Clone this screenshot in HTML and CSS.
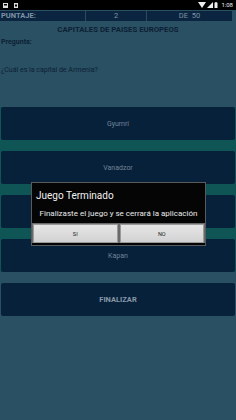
FILE: index.html
```html
<!DOCTYPE html>
<html>
<head>
<meta charset="utf-8">
<link rel="stylesheet" href="styles.css">
</head>
<body>
<div class="screen">
  <div class="statusbar">
    <div class="st-left">
      <svg width="5" height="5" viewBox="0 0 5 5"><rect x="0.5" y="0.5" width="4" height="4" fill="none" stroke="#ddd" stroke-width="1"/><rect x="1" y="2.5" width="3" height="1.5" fill="#ddd"/></svg>
      <svg width="4" height="5" viewBox="0 0 4 5"><rect x="0" y="0" width="4" height="5" fill="#ddd"/><rect x="1" y="1.5" width="2" height="2" fill="#000"/></svg>
    </div>
    <div class="st-right">
      <svg width="8" height="6" viewBox="0 0 8 6"><path d="M0 0 H8 L4 6 Z" fill="#eee"/></svg>
      <svg width="6" height="6" viewBox="0 0 6 6"><path d="M6 0 V6 H0 Z" fill="#eee"/></svg>
      <svg width="4" height="6" viewBox="0 0 4 6"><rect x="0.5" y="0.7" width="3" height="5.3" fill="#eee"/><rect x="1.3" y="0" width="1.4" height="1" fill="#eee"/></svg>
      <span class="clock">1:08</span>
    </div>
  </div>
  <div class="scorebar">
    <div class="cell c1">PUNTAJE:</div>
    <div class="cell c2">2</div>
    <div class="cell c3">DE&nbsp;&nbsp;50</div>
  </div>
  <div class="title">CAPITALES DE PAISES EUROPEOS</div>
  <div class="label">Pregunta:</div>
  <div class="question">¿Cuál es la capital de Armenia?</div>
  <div class="answers">
    <div class="btn">Gyumri</div>
    <div class="btn">Vanadzor</div>
    <div class="btn"></div>
    <div class="btn">Kapan</div>
  </div>
  <div class="btn finish">FINALIZAR</div>

  <div class="dialog">
    <div class="dlg-title">Juego Terminado</div>
    <div class="dlg-msg">Finalizaste el juego y se cerrará la aplicación</div>
    <div class="dlg-buttons">
      <div class="dlg-btn">SI</div>
      <div class="dlg-btn">NO</div>
    </div>
  </div>
</div>
</body>
</html>
```

FILE: styles.css
```css
html, body {
  margin: 0;
  padding: 0;
}
body {
  width: 236px;
  height: 420px;
  background: #2a5063;
  font-family: Roboto, "Liberation Sans", sans-serif;
  overflow: hidden;
}
.screen {
  position: relative;
  width: 236px;
  height: 420px;
}
.statusbar {
  height: 10px;
  background: #000;
  display: flex;
  justify-content: space-between;
  align-items: center;
  padding: 0 3px;
}
.st-left {
  display: flex;
  gap: 6px;
  align-items: center;
}
.st-right {
  display: flex;
  gap: 1px;
  align-items: center;
}
.clock {
  color: #eee;
  font-size: 6px;
  margin-left: 2px;
  line-height: 6px;
}
.scorebar {
  display: flex;
  height: 10px;
  margin-top: 1px;
  margin-right: 4px;
  background: #0b2540;
}
.cell {
  color: #7d93a6;
  font-size: 7.5px;
  line-height: 10px;
  font-weight: bold;
  box-sizing: border-box;
}
.c1 {
  width: 86px;
  padding-left: 1px;
  border-right: 1px solid #2c4a60;
}
.c2 {
  width: 61px;
  text-align: center;
  border-right: 1px solid #2c4a60;
  font-weight: normal;
}
.c3 {
  flex: 1;
  text-align: center;
  font-weight: normal;
}
.title {
  margin-top: 3px;
  text-align: center;
  font-weight: bold;
  font-size: 7.8px;
  line-height: 12px;
  color: #0c2034;
}
.label {
  padding-left: 1px;
  font-weight: bold;
  font-size: 7px;
  line-height: 12px;
  color: #0c2034;
}
.question {
  margin-top: 17px;
  padding-left: 1px;
  font-size: 7px;
  line-height: 10px;
  color: #0c2034;
}
.answers {
  margin-top: 32px;
  display: flex;
  flex-direction: column;
  gap: 11px;
  background: #0f5556;
}
.btn {
  height: 33px;
  margin: 0 1px;
  background: #08213a;
  border-radius: 2px;
  color: #6f8499;
  font-size: 7px;
  display: flex;
  align-items: center;
  justify-content: center;
}
.finish {
  margin-top: 11px;
  font-weight: bold;
  font-size: 7.5px;
  color: #8698a8;
}
.dialog {
  position: absolute;
  left: 31px;
  top: 182px;
  width: 175px;
  box-sizing: border-box;
  background: #050505;
  border: 1px solid #5a5a5a;
  padding-bottom: 2px;
}
.dlg-title {
  color: #f2f2f2;
  font-size: 10px;
  line-height: 12px;
  padding: 7px 0 0 4px;
}
.dlg-msg {
  color: #eaeaea;
  font-size: 8px;
  line-height: 10px;
  text-align: center;
  padding: 7px 0 4px;
}
.dlg-buttons {
  display: flex;
  gap: 2px;
  padding: 0 1px;
  background: #6a6a6a;
  padding-top: 1px;
}
.dlg-btn {
  flex: 1;
  height: 19px;
  background: linear-gradient(#e6e6e6, #d2d2d2);
  border: 1px solid #9a9a9a;
  box-sizing: border-box;
  color: #222;
  font-size: 5.5px;
  display: flex;
  align-items: center;
  justify-content: center;
}
```
